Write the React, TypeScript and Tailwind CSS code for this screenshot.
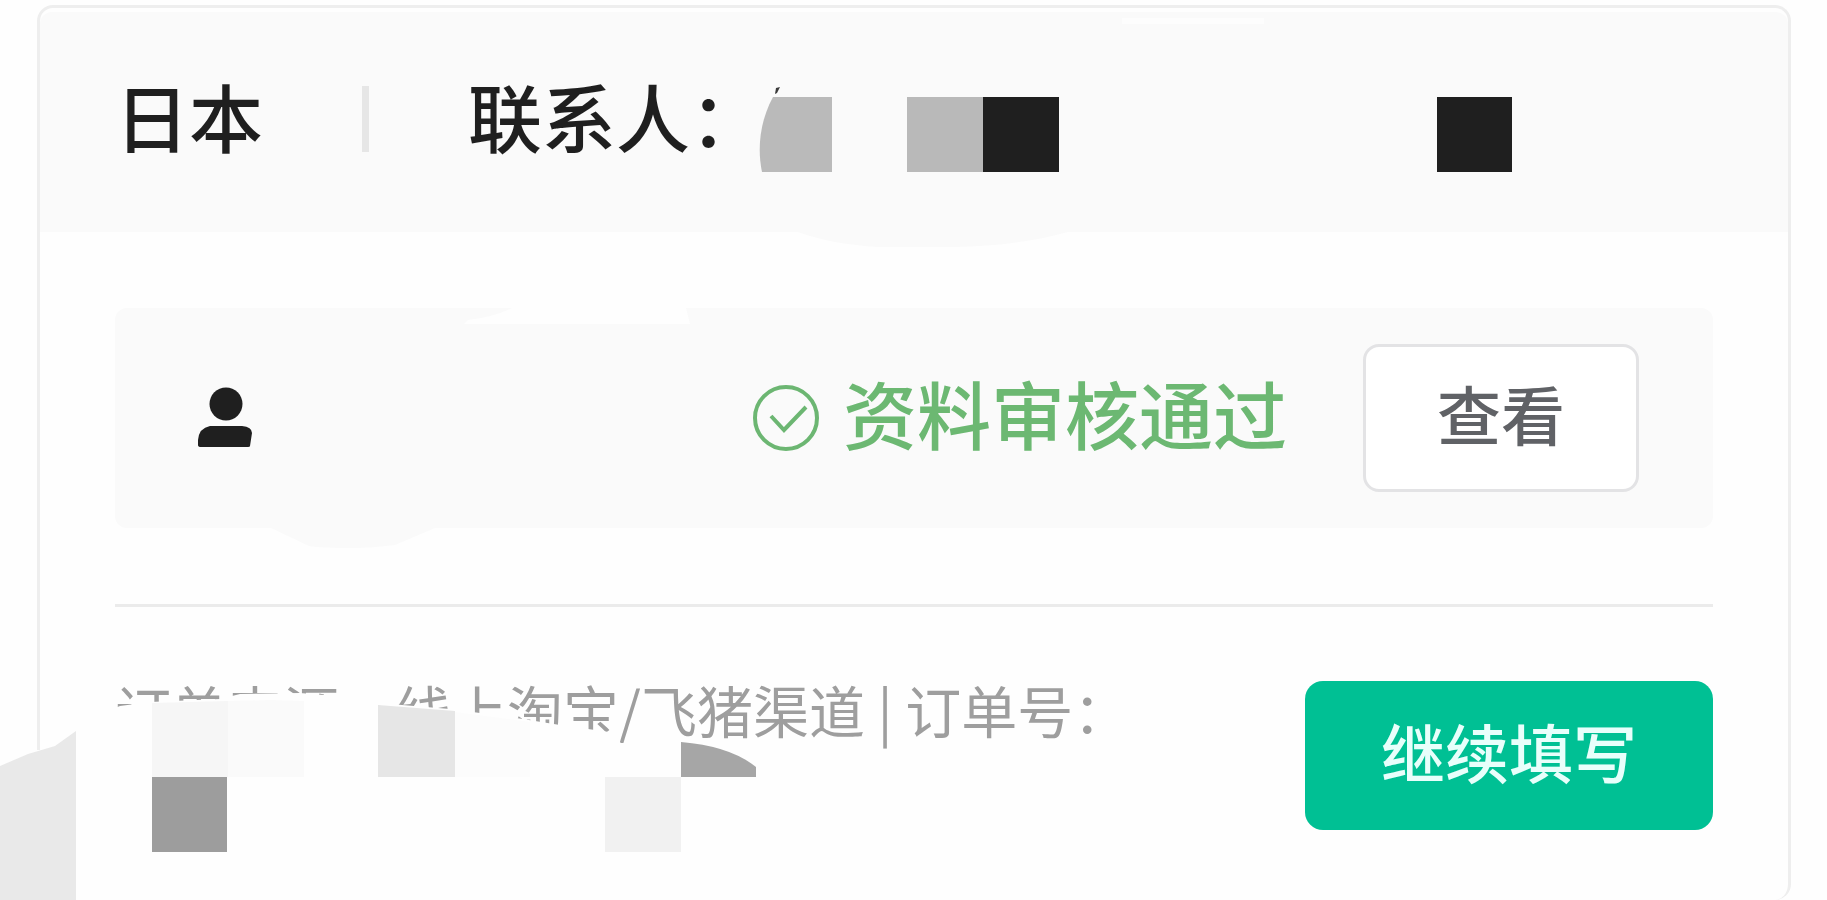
import React from "react";

interface StatusRowProps {
  status: string;
  action: string;
}

interface OrderFooterProps {
  source: string;
  action: string;
}

const HeaderMask: React.FC = () => (
  <svg
    viewBox="0 0 756 100"
    className="-ml-2 mt-1.5 h-[100px] w-[756px] shrink-0"
    aria-hidden="true"
  >
    <path d="M20 16l4-1-3 6-2 1z" fill="#3a3a3a" />
    <path d="M17 25H76V100H6C1 76 4 49 17 25Z" fill="#bababa" />
    <path d="M151 25h76v75h-76z" fill="#b9b9b9" />
    <path d="M227 25h76v75h-76z" fill="#1f1f1f" />
    <path d="M681 25h75v75h-75z" fill="#1f1f1f" />
  </svg>
);

const UserIcon: React.FC = () => (
  <svg viewBox="0 0 54 62" className="h-[62px] w-[54px]" aria-hidden="true">
    <circle cx="28" cy="17" r="16.5" fill="#1f1f1f" />
    <path
      d="M12 39H44Q54 40 54 46L52 59Q52 60 50 60H3Q0 60 0 58V53Q1 41 12 39Z"
      fill="#1f1f1f"
    />
  </svg>
);

const CheckIcon: React.FC = () => (
  <svg
    viewBox="0 0 66 66"
    className="h-[66px] w-[66px]"
    fill="none"
    stroke="#6cb672"
    strokeWidth="4"
    aria-hidden="true"
  >
    <circle cx="33" cy="33" r="31" />
    <path d="M18 31L31 45L53 22" />
  </svg>
);

const CardHeader: React.FC = () => (
  <header className="relative flex h-[220px] items-center rounded-t-xl bg-[#fafafa] pb-1.5 pl-[75px] text-[74px] font-medium leading-[88px] text-[#1f1f1f]">
    <h1 className="pb-2">日本</h1>
    <div className="mx-[99px] h-[66px] w-[7px] shrink-0 bg-[#e6e6e6]" />
    <p className="whitespace-nowrap pb-2">联系人：</p>
    <HeaderMask />
    <svg
      viewBox="0 0 270 16"
      className="absolute left-[758px] top-full h-4 w-[270px]"
      aria-hidden="true"
    >
      <path d="M0 0H270C230 11 190 15 150 15H80C50 13 25 9 0 0Z" fill="#fafafa" />
    </svg>
    <div className="absolute left-[1082px] top-1.5 h-1.5 w-[142px] bg-[#fdfdfd]" />
  </header>
);

const StatusRow: React.FC<StatusRowProps> = ({ status, action }) => (
  <section className="relative flex h-[220px] items-center justify-between rounded-xl bg-[#fafafa] pl-[83px] pr-[74px] font-medium">
    <UserIcon />
    <div className="flex items-center">
      <CheckIcon />
      <span className="ml-6 whitespace-nowrap pb-3 text-[74px] leading-[88px] text-[#6cb872]">
        {status}
      </span>
      <button className="ml-[76px] h-[148px] w-[276px] rounded-2xl border-3 border-[#e3e3e5] bg-white pb-3 text-[64px] leading-[72px] text-[#606266]">
        {action}
      </button>
    </div>
    <svg
      viewBox="0 0 226 16"
      className="absolute left-[349px] top-0 h-4 w-[226px]"
      aria-hidden="true"
    >
      <path d="M48 0H222L226 16H0L4 12Q30 9 48 0Z" fill="#fefefe" />
    </svg>
    <svg
      viewBox="0 0 164 22"
      className="absolute left-[156px] top-full h-[22px] w-[164px]"
      aria-hidden="true"
    >
      <path d="M0 0H164L124 17Q100 20 84 20Q50 20 38 18Z" fill="#fafafa" />
    </svg>
  </section>
);

const FooterMask: React.FC = () => (
  <svg
    viewBox="0 1 760 220"
    className="pointer-events-none absolute -left-[115px] top-0 h-[220px] w-[760px]"
    aria-hidden="true"
  >
    <path
      d="M0 70H76V50L110 30L120 26L150 22L220 19L240 14L300 13L335 16L345 12H390V24L450 29L510 37L560 45L616 53L622 66V100H480V221H0Z"
      fill="#fefefe"
    />
    <path d="M0 86L28 74L55 66L76 51V221H0Z" fill="#e9e9e9" />
    <path d="M152 23L228 21V97H152Z" fill="#f6f6f6" />
    <path d="M228 21L270 20L304 21V97H228Z" fill="#fafafa" />
    <path d="M152 97h75v75h-75z" fill="#9d9d9d" />
    <path d="M378 25L455 31V97H378Z" fill="#e6e6e6" />
    <path d="M455 32L530 42V97H455Z" fill="#fcfcfc" />
    <path d="M605 97h76v75h-76z" fill="#f1f1f1" />
    <path d="M681 62Q730 66 756 87V97H681Z" fill="#a6a6a6" />
  </svg>
);

const OrderFooter: React.FC<OrderFooterProps> = ({ source, action }) => (
  <footer className="relative mt-[74px] flex items-start justify-between">
    <p className="whitespace-nowrap text-[56px] leading-[56px] text-[#9e9e9e]">
      {source}
    </p>
    <button className="h-[149px] w-[408px] shrink-0 rounded-[18px] bg-[#00c094] pb-3 text-[64px] font-medium leading-[72px] text-[#e8fffb]">
      {action}
    </button>
    <FooterMask />
  </footer>
);

const App: React.FC = () => {
  return (
    <main className="overflow-hidden bg-[#fefefe] pl-[37px] pr-9 pt-[5px] font-['Noto_Sans_CJK_SC',sans-serif]">
      <article className="rounded-2xl border-3 border-b-0 border-[#eeeeee] pt-1">
        <CardHeader />
        <div className="px-[75px] pb-[70px] pt-[76px]">
          <StatusRow status="资料审核通过" action="查看" />
          <hr className="mt-[76px] border-t-3 border-[#ebebeb]" />
          <OrderFooter
            source="订单来源：线上淘宝/飞猪渠道 | 订单号："
            action="继续填写"
          />
        </div>
      </article>
    </main>
  );
};

export default App;
